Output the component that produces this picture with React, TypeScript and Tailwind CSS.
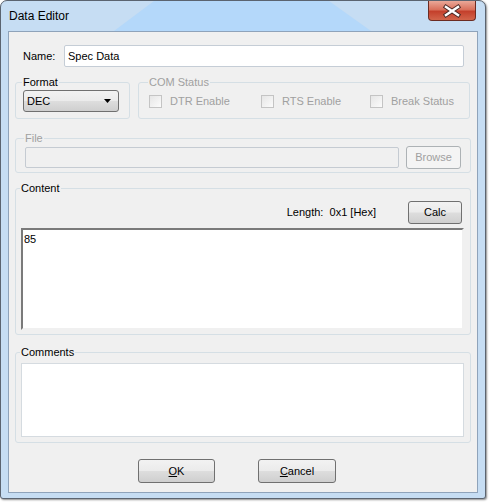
import React from 'react'

interface GroupBoxProps {
  title: string
  disabled?: boolean
  className?: string
  children?: React.ReactNode
}

function GroupBox({ title, disabled, className = '', children }: GroupBoxProps) {
  return (
    <fieldset className={`rounded-[3px] border border-[#d5dfe5] ${className}`}>
      <legend className={`-ml-[1px] px-[1px] leading-[13px] ${disabled ? 'text-[#a0a0a0]' : 'text-black'}`}>{title}</legend>
      {children}
    </fieldset>
  )
}

function CheckBox({ label, className = '' }: { label: string; className?: string }) {
  return (
    <div className={`flex items-center ${className}`}>
      <div className="h-[13px] w-[13px] border border-[#c4c4c4] bg-gradient-to-br from-[#e6e6e6] to-[#fbfbfb]" />
      <span className="ml-[8px] text-[#a0a0a0]">{label}</span>
    </div>
  )
}

function PushButton({ children, className = '', disabled }: { children: React.ReactNode; className?: string; disabled?: boolean }) {
  return (
    <button
      className={`flex items-center justify-center rounded-[3px] border ${
        disabled
          ? 'border-[#adb2b5] bg-[#f4f4f4] text-[#a0a0a0]'
          : 'border-[#707070] bg-[linear-gradient(#f2f2f2_0%,#ebebeb_48%,#dddddd_52%,#cfcfcf_100%)] text-black'
      } ${className}`}
    >
      {children}
    </button>
  )
}

export default function App() {
  return (
    <div className="h-[504px] w-[489px] bg-white font-['Liberation_Sans',Arial,sans-serif] text-[11px] text-black">
      <div className="h-[499px] w-[486px] rounded-t-[7px] rounded-b-[3px] border border-[#5b6470] bg-[#c6ddf3] shadow-[1px_1px_2px_rgba(0,0,0,0.45)]">
        {/* title bar */}
        <div className="relative flex h-[30px] items-start justify-between">
          <svg className="absolute left-0 top-0" width="484" height="30">
            <polygon points="153,0 328,0 370,30 113,30" fill="#b4d8fa" />
          </svg>
          <span className="relative ml-[8px] mt-[8px] text-[12px] leading-[14px] text-black">Data Editor</span>
          <div className="relative mr-[9px] h-[20px] w-[48px] rounded-b-[4px] border border-t-0 border-[#6b2b22] bg-[linear-gradient(#eaa898_0%,#d9715c_45%,#c4402c_55%,#d2654b_100%)]">
            <svg width="46" height="19" className="block">
              <path d="M17 6 L29 14 M29 6 L17 14" stroke="#4a2a26" strokeWidth="4.5" strokeLinecap="square" />
              <path d="M17 6 L29 14 M29 6 L17 14" stroke="#ffffff" strokeWidth="2.5" strokeLinecap="square" />
            </svg>
          </div>
        </div>

        {/* client area */}
        <div className="ml-[7px] h-[462px] w-[470px] border border-[#8fa3ba] bg-[#f0f0f0] px-[6px]">
          <div className="mt-[13px] flex h-[22px] items-center pl-[8px]">
            <span className="w-[41px]">Name:</span>
            <div className="flex h-[22px] w-[400px] items-center rounded-[2px] border border-[#c5cdd6] bg-white pl-[3px]">Spec Data</div>
          </div>

          <div className="mt-[9px] flex">
            <GroupBox title="Format" className="w-[115px] pb-[6px] pl-[7px] pt-[1px]">
              <div className="relative flex h-[22px] w-[96px] items-center rounded-[3px] border border-[#707070] bg-[linear-gradient(#f2f2f2_0%,#ebebeb_48%,#dddddd_52%,#cfcfcf_100%)] pl-[3px]">
                DEC
                <svg className="absolute right-[6px] top-[8px]" width="8" height="5">
                  <polygon points="0,0 7,0 3.5,4" fill="#000" />
                </svg>
              </div>
            </GroupBox>
            <GroupBox title="COM Status" disabled className="ml-[8px] w-[332px] pl-[10px] pt-[1px]">
              <div className="flex h-[22px] items-center">
                <CheckBox label="DTR Enable" className="w-[112px]" />
                <CheckBox label="RTS Enable" className="w-[109px]" />
                <CheckBox label="Break Status" />
              </div>
            </GroupBox>
          </div>

          <GroupBox title="File" disabled className="mt-[13px] pb-[3px] pl-[9px] pt-[1px]">
            <div className="flex h-[23px] items-center">
              <div className="h-[21px] w-[374px] rounded-[2px] border border-[#c5cbd2] bg-[#f0f0f0]" />
              <PushButton disabled className="ml-[7px] h-[23px] w-[55px]">Browse</PushButton>
            </div>
          </GroupBox>

          <GroupBox title="Content" className="mt-[9px] pb-[4px] pl-[5px] pt-[6px]">
            <div className="flex h-[23px] items-center justify-end pr-[8px]">
              <span className="mr-[32px]">Length:&nbsp; 0x1 [Hex]</span>
              <PushButton className="h-[23px] w-[54px]">Calc</PushButton>
            </div>
            <div className="mt-[4px] h-[102px] w-[443px] border-2 border-b-[#f0f0f0] border-l-[#7a7a7a] border-r-[#f0f0f0] border-t-[#7a7a7a] bg-white pl-[1px] pt-[3px] leading-[13px]">
              85
            </div>
          </GroupBox>

          <GroupBox title="Comments" className="mt-[11px] pb-[5px] pl-[5px] pt-[4px]">
            <div className="h-[74px] w-[443px] border border-[#d5dbe0] bg-white" />
          </GroupBox>

          <div className="mt-[16px] flex pl-[123px]">
            <PushButton className="h-[24px] w-[77px]">
              <span><span className="underline">O</span>K</span>
            </PushButton>
            <PushButton className="ml-[43px] h-[24px] w-[78px]">
              <span><span className="underline">C</span>ancel</span>
            </PushButton>
          </div>
        </div>
      </div>
    </div>
  )
}
